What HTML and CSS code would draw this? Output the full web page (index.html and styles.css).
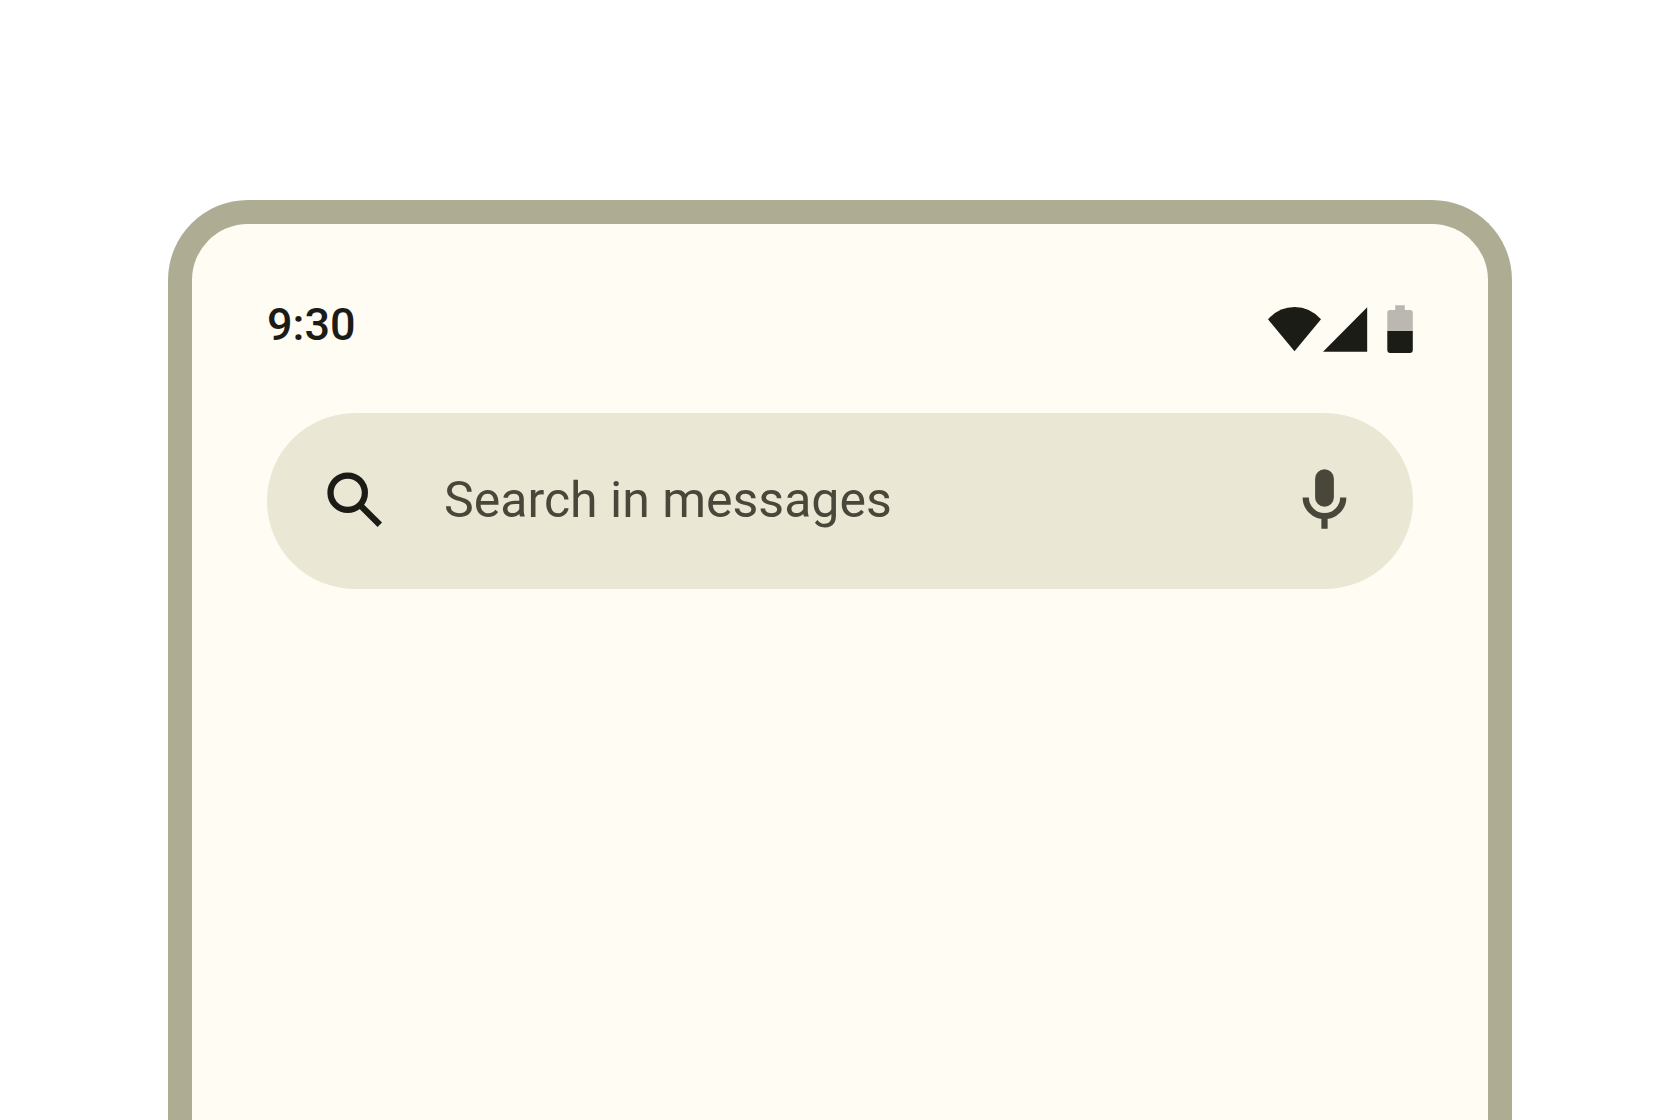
FILE: index.html
```html
<!DOCTYPE html>
<html lang="en">
<head>
<meta charset="utf-8">
<meta name="viewport" content="width=device-width, initial-scale=1">
<title>Messages</title>
<link rel="stylesheet" href="styles.css">
</head>
<body>
<main class="device">
  <header class="status-bar">
    <time class="clock" datetime="09:30">9:30</time>
    <svg class="status-icons" viewBox="0 0 145 48" aria-hidden="true">
      <path d="M0 14.300Q11 2 26.500 2T53 14.300L26.500 46.300Z"/>
      <path d="M99.200 2.300V46.700H55Z"/>
      <path opacity=".3" d="M119.300 26V7.800A2.800 2.800 0 0 1 122.100 5H127.200V.2H136.800V5H142A2.800 2.800 0 0 1 144.800 7.800V26Z"/>
      <path d="M119.300 26H144.800V45A3 3 0 0 1 141.800 48H122.300A3 3 0 0 1 119.300 45Z"/>
    </svg>
  </header>
  <form class="search-bar" role="search">
    <button class="icon-button" type="submit" aria-label="Search">
      <svg class="icon" viewBox="0 0 24 24" aria-hidden="true">
        <g fill="none" stroke="currentColor" stroke-width="2">
          <circle cx="9.500" cy="9.500" r="5.500"/>
          <path d="M13.500 13.500L19.780 19.780"/>
        </g>
      </svg>
    </button>
    <input class="search-input" type="text" placeholder="Search in messages" aria-label="Search in messages">
    <button class="icon-button voice" type="button" aria-label="Voice search">
      <svg class="icon" viewBox="0 0 24 24" aria-hidden="true">
        <rect x="9" y="2" width="6" height="12" rx="3" fill="currentColor"/>
        <path d="M6 11a6 6 0 0 0 12 0M12 17v4" fill="none" stroke="currentColor" stroke-width="2"/>
      </svg>
    </button>
  </form>
</main>
</body>
</html>
```
FILE: styles.css
```css
* {
  box-sizing: border-box;
}

body {
  margin: 0;
  min-height: 100vh;
  padding: 200px 10% 0;
  display: flex;
  flex-direction: column;
  background: #fff;
  font-family: Roboto, sans-serif;
  color: #1c1c17;
}

.device {
  flex: 1;
  display: flex;
  flex-direction: column;
  gap: 60px;
  padding: 75px 75px 0;
  border: 24px solid #aeac93;
  border-bottom: 0;
  border-radius: 80px 80px 0 0;
  background: #fffcf4;
}

.status-bar {
  display: flex;
  justify-content: space-between;
  align-items: flex-end;
  height: 54px;
}

.clock {
  align-self: flex-start;
  font-size: 45px;
  line-height: 52px;
  font-weight: 500;
}

.status-icons {
  width: 145px;
  height: 48px;
  fill: #1c1c17;
}

.search-bar {
  display: flex;
  align-items: center;
  gap: 51px;
  height: 176px;
  padding: 0 51px 2px;
  border-radius: 88px;
  background: #eae7d5;
}

.icon-button {
  display: flex;
  padding: 0;
  border: 0;
  background: none;
  color: #1c1c17;
}

.voice {
  color: #494739;
}

.icon {
  width: 75px;
  height: 75px;
}

.search-input {
  flex: 1;
  min-width: 0;
  padding: 0;
  border: 0;
  outline: 0;
  background: none;
  font: 400 50px/76px Roboto, sans-serif;
  color: #494739;
}

.search-input::placeholder {
  color: #494739;
  opacity: 1;
}
```
